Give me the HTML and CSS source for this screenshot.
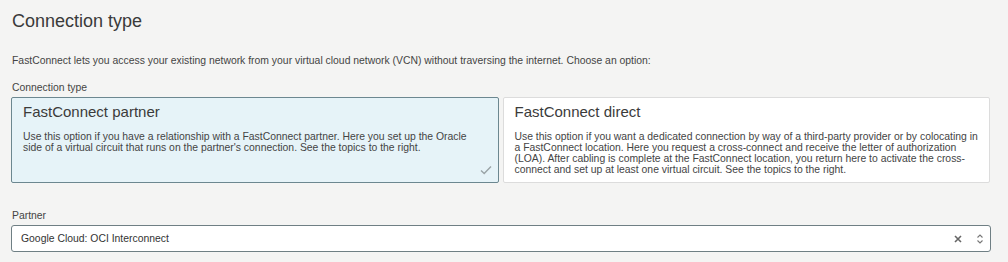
FILE: index.html
```html
<!DOCTYPE html>
<html lang="en">
<head>
    <meta charset="UTF-8">
    <title>Connection type</title>
    <link rel="stylesheet" href="styles.css">
</head>
<body>
    <div class="pagina">
        <h1 class="titulo">Connection type</h1>
        <p class="descricao">FastConnect lets you access your existing network from your virtual cloud network (VCN) without traversing the internet. Choose an option:</p>

        <div class="rotulo">Connection type</div>
        <div class="opcoes">
            <div class="opcao selecionada">
                <div class="opcao-titulo">FastConnect partner</div>
                <p class="opcao-texto">Use this option if you have a relationship with a FastConnect partner. Here you set up the Oracle side of a virtual circuit that runs on the partner's connection. See the topics to the right.</p>
                <svg class="check" width="12" height="10" viewBox="0 0 12 10">
                    <path d="M1 5.5 L4.2 8.5 L11 1.5" fill="none" stroke="#9aa3a6" stroke-width="1.4"/>
                </svg>
            </div>
            <div class="opcao">
                <div class="opcao-titulo">FastConnect direct</div>
                <p class="opcao-texto">Use this option if you want a dedicated connection by way of a third-party provider or by colocating in a FastConnect location. Here you request a cross-connect and receive the letter of authorization (LOA). After cabling is complete at the FastConnect location, you return here to activate the cross-connect and set up at least one virtual circuit. See the topics to the right.</p>
            </div>
        </div>

        <div class="rotulo rotulo-parceiro">Partner</div>
        <div class="selecao">
            <span class="selecao-valor">Google Cloud: OCI Interconnect</span>
            <svg class="limpar" width="8" height="8" viewBox="0 0 8 8">
                <path d="M1 1 L7 7 M7 1 L1 7" stroke="#666" stroke-width="1.6"/>
            </svg>
            <svg class="setas" width="8" height="12" viewBox="0 0 8 12">
                <path d="M1.5 4.5 L4 2 L6.5 4.5 M1.5 7.5 L4 10 L6.5 7.5" fill="none" stroke="#777" stroke-width="1.1"/>
            </svg>
        </div>
    </div>
</body>
</html>
```

FILE: styles.css
```css
* {
  padding: 0;
  margin: 0;
  box-sizing: border-box;
}

body {
  background-color: #f4f4f3;
  color: #333;
  font-family: "Liberation Sans", Arial, Helvetica, sans-serif;
}

.pagina {
  padding: 11px 18px 0 11px;
}

.titulo {
  font-size: 18px;
  font-weight: normal;
  color: #3a3a3a;
  padding-left: 1px;
  line-height: 20px;
}

.descricao {
  font-size: 10.4px;
  color: #444;
  margin-top: 24px;
  padding-left: 1px;
  line-height: 12px;
}

.rotulo {
  font-size: 10.4px;
  color: #444;
  margin-top: 15px;
  padding-left: 1px;
  line-height: 12px;
}

.opcoes {
  display: flex;
  gap: 4px;
  margin-top: 3px;
}

.opcao {
  position: relative;
  flex: 1;
  height: 86px;
  background-color: #fff;
  border: 1px solid #dcdcdc;
  border-radius: 2px;
  padding: 5px 11px;
}

.opcao.selecionada {
  background-color: #e6f3f8;
  border-color: #6c8790;
}

.opcao-titulo {
  font-size: 15px;
  color: #3b3b3b;
  line-height: 18px;
}

.opcao-texto {
  font-size: 10.4px;
  color: #444;
  margin-top: 10px;
  line-height: 11px;
}

.check {
  position: absolute;
  right: 6px;
  bottom: 7px;
}

.rotulo-parceiro {
  margin-top: 27px;
}

.selecao {
  display: flex;
  align-items: center;
  height: 27px;
  margin-top: 3px;
  margin-right: -1px;
  background-color: #fff;
  border: 1px solid #6f7f84;
  border-radius: 3px;
  padding: 0 6px 0 9px;
}

.selecao-valor {
  flex: 1;
  font-size: 10.4px;
  color: #333;
}

.limpar {
  margin-right: 14px;
}
```
